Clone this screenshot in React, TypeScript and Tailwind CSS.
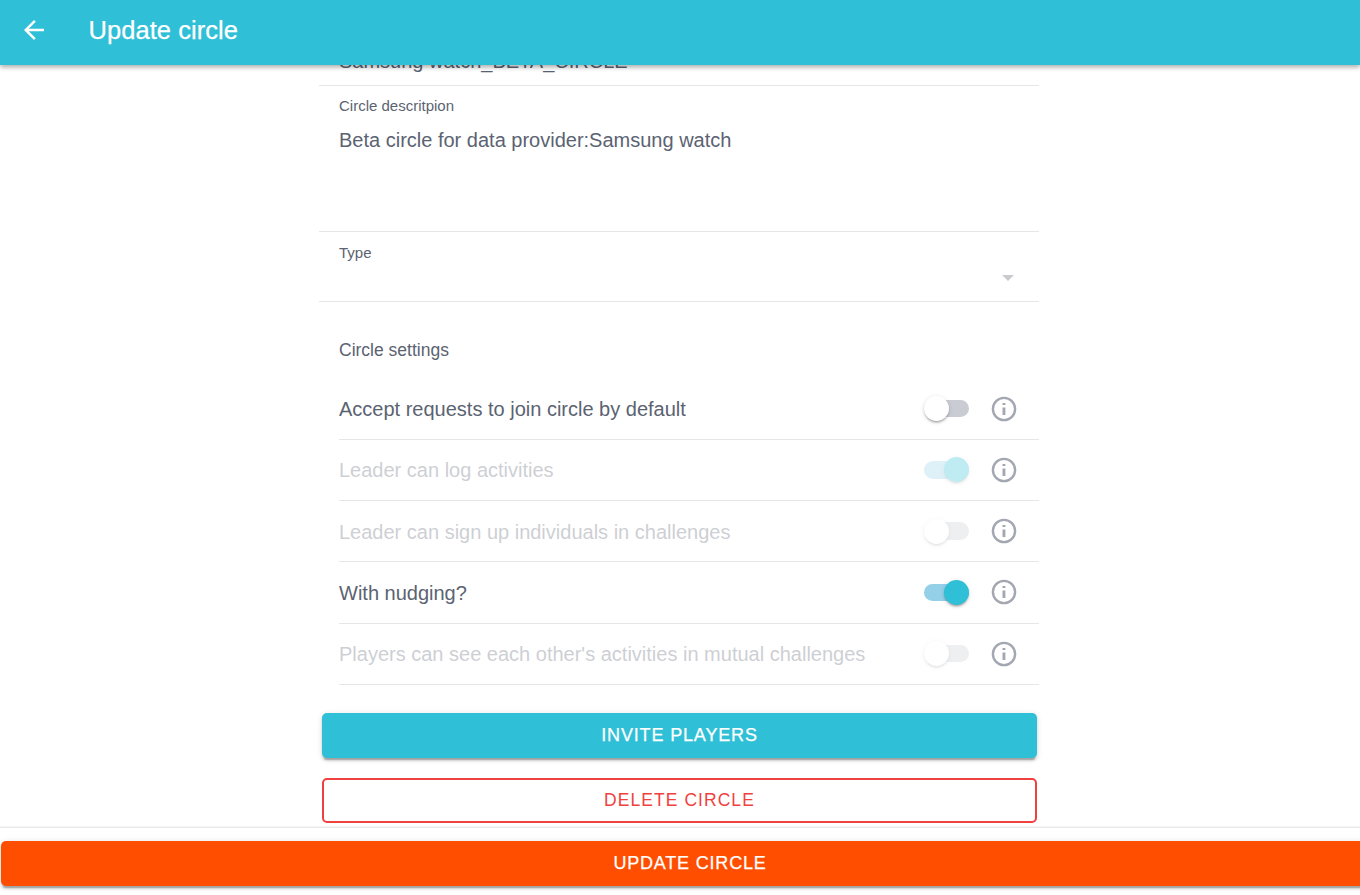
import React from "react";

type Setting = {
  label: string;
  on: boolean;
  disabled: boolean;
  row: string;
  track: string;
  icon: string;
};

const settings: Setting[] = [
  { label: "Accept requests to join circle by default", on: false, disabled: false, row: "h-[62px] pt-[18px]", track: "h-[17px] mt-[4px]", icon: "-mt-[2px]" },
  { label: "Leader can log activities", on: true, disabled: true, row: "h-[61px] pt-[17px]", track: "h-[18px] mt-[4px] pb-px", icon: "-mt-[2px]" },
  { label: "Leader can sign up individuals in challenges", on: false, disabled: true, row: "h-[61px] pt-[18px]", track: "h-[18px] mt-[3px]", icon: "-mt-[3px]" },
  { label: "With nudging?", on: true, disabled: false, row: "h-[62px] pt-[18px]", track: "h-[17px] mt-[4px]", icon: "-mt-[3px]" },
  { label: "Players can see each other's activities in mutual challenges", on: false, disabled: true, row: "h-[61px] pt-[17px]", track: "h-[17px] mt-[4px]", icon: "-mt-[2px]" },
];

const raised =
  "shadow-[0_4px_1px_-2.5px_rgba(0,0,0,0.2),0_2.5px_2.5px_0_rgba(0,0,0,0.14),0_1px_6px_0_rgba(0,0,0,0.12)]";

function BackArrow() {
  return (
    <svg viewBox="0 0 24 24" className="size-[30px]" fill="currentColor">
      <path d="M20 11H7.83l5.59-5.59L12 4l-8 8 8 8 1.41-1.41L7.83 13H20v-2z" />
    </svg>
  );
}

function InfoIcon() {
  return (
    <svg viewBox="0 0 30 30" className="size-[30px] shrink-0 text-[#a3a7b1]" fill="currentColor">
      <circle cx="15" cy="15" r="11.1" fill="none" stroke="currentColor" strokeWidth="2.4" />
      <path d="M13.5 9h2.9v2h-2.9zM13.5 13.4h2.9V21h-2.9z" />
    </svg>
  );
}

function Toggle({ on, disabled, track }: { on: boolean; disabled: boolean; track: string }) {
  return (
    <div className={`flex h-[25px] w-[45px] shrink-0 items-start ${disabled ? "opacity-30" : ""}`}>
      <div className={`flex w-[45px] items-center rounded-full ${track} ${on ? "justify-end bg-[#95d0e9]" : "bg-[#c9ccd2]"}`}>
        <div
          className={`size-[25px] shrink-0 rounded-full shadow-[0_3px_2px_-2px_rgba(0,0,0,0.2),0_2px_2px_0_rgba(0,0,0,0.14),0_1px_5px_0_rgba(0,0,0,0.12)] ${on ? "bg-[#2fbfd6]" : "bg-white"}`}
        />
      </div>
    </div>
  );
}

export default function App() {
  return (
    <div className="flex h-[895px] w-full flex-col overflow-hidden bg-white font-['Liberation_Sans',Arial,sans-serif] text-[#5b6372]">
      <header className="relative z-10 flex h-[65px] shrink-0 items-center bg-[#2fbfd6] pb-[5px] pl-[19px] text-white shadow-[0_2px_5px_rgba(0,0,0,0.35)]">
        <BackArrow />
        <h1 className="ml-[39.5px] text-[25.5px] leading-[30px] font-normal tracking-[0.05px] [-webkit-text-stroke:0.25px_white]">Update circle</h1>
      </header>

      <main className="flex min-h-0 flex-1 flex-col overflow-hidden">
        <div className="ml-[319px] flex w-[720px] flex-col">
          <div className="flex h-[21px] shrink-0 flex-col justify-end border-b border-[#e5e6e8] pb-[12px] pl-5">
            <span className="text-[20px] leading-6">Samsung watch_BETA_CIRCLE</span>
          </div>
          <div className="flex h-[146px] flex-col border-b border-[#e5e6e8] pt-[11px] pl-5">
            <label className="text-[15px] leading-[18px]">Circle descritpion</label>
            <span className="mt-[13px] text-[20px] leading-6">Beta circle for data provider:Samsung watch</span>
          </div>
          <div className="flex h-[70px] justify-between border-b border-[#e5e6e8] pr-[25px] pl-5">
            <label className="pt-3 text-[15px] leading-[18px]">Type</label>
            <svg viewBox="0 0 12 6" className="mt-[43px] h-[6px] w-[12px]" fill="#c8cad0">
              <path d="M0 0h12L6 6z" />
            </svg>
          </div>

          <h2 className="mt-[37px] h-[39px] pl-5 text-[17.5px] leading-[22px] font-normal">Circle settings</h2>

          <div className="flex flex-col pl-5">
            {settings.map((s) => (
              <div key={s.label} className={`flex items-start border-b border-[#e5e6e8] pr-5 ${s.row}`}>
                <span className={`mt-px flex-1 text-[20px] leading-6 ${s.disabled ? "opacity-30" : ""}`}>{s.label}</span>
                <Toggle on={s.on} disabled={s.disabled} track={s.track} />
                <div className={`ml-5 ${s.icon}`}>
                  <InfoIcon />
                </div>
              </div>
            ))}
          </div>

          <div className="mt-7 flex flex-col gap-5 pr-[2px] pl-[3px]">
            <button className={`h-[45px] rounded-[5px] bg-[#2fbfd6] pb-px text-[18px] leading-[22px] font-medium tracking-[0.85px] text-white [-webkit-text-stroke:0.25px_white] ${raised}`}>
              INVITE PLAYERS
            </button>
            <button className="h-[45px] rounded-[5px] border-2 border-[#f04141] text-[17.5px] tracking-[1.05px] text-[#f04141]">
              DELETE CIRCLE
            </button>
          </div>
        </div>
      </main>

      <footer className="relative h-[68px] shrink-0 border-t border-[#ececec] bg-white pt-[13px] pl-px shadow-[0_-1px_0_#f4f4f4]">
        <button className={`h-[45px] w-[1378px] rounded-[5px] bg-[#ff4e00] pb-px text-[18px] leading-[22px] font-medium tracking-[0.8px] text-white [-webkit-text-stroke:0.25px_white] ${raised}`}>
          UPDATE CIRCLE
        </button>
      </footer>
    </div>
  );
}
